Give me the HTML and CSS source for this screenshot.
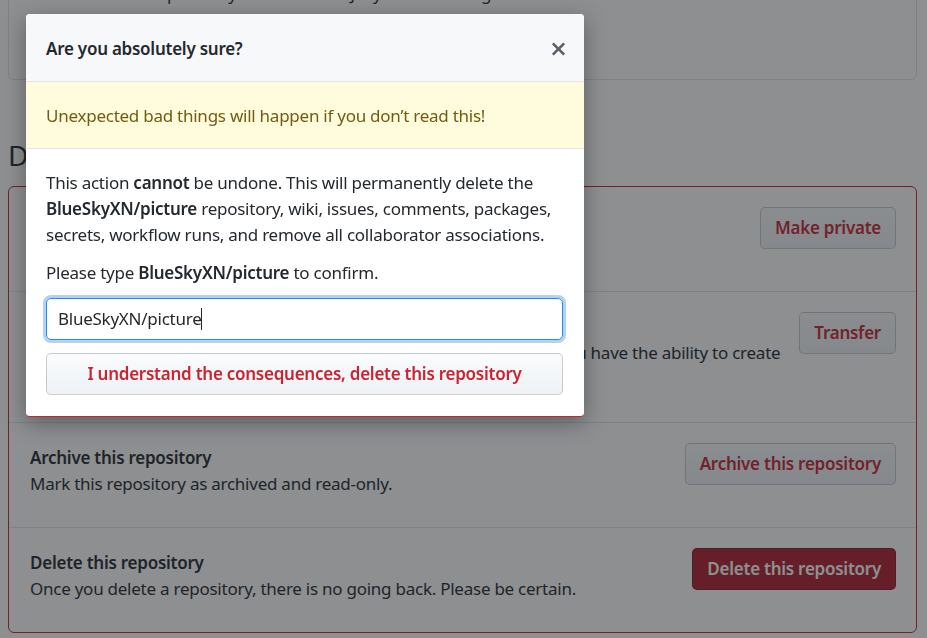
FILE: index.html
```html
<!DOCTYPE html>
<html lang="en">
<head>
<meta charset="utf-8">
<title>Delete repository</title>
<link rel="stylesheet" href="styles.css">
</head>
<body>
<div class="container">
  <div class="pages-box">
    <p>Select a theme to publish your site with a Jekyll theme using the master branch. <a href="#">Learn more.</a></p>
  </div>

  <h2 class="subhead">Danger Zone</h2>

  <div class="danger-box">
    <div class="row">
      <div class="row-text">
        <strong class="row-title">Change repository visibility</strong>
        <p class="row-desc">This repository is currently public.</p>
      </div>
      <button class="btn btn-danger-outline">Make private</button>
    </div>
    <div class="row">
      <div class="row-text">
        <strong class="row-title">Transfer ownership</strong>
        <p class="row-desc">Transfer this repository to another user or to an organization where you have the ability to create repositories.</p>
      </div>
      <button class="btn btn-danger-outline">Transfer</button>
    </div>
    <div class="row">
      <div class="row-text">
        <strong class="row-title">Archive this repository</strong>
        <p class="row-desc">Mark this repository as archived and read-only.</p>
      </div>
      <button class="btn btn-danger-outline">Archive this repository</button>
    </div>
    <div class="row">
      <div class="row-text">
        <strong class="row-title">Delete this repository</strong>
        <p class="row-desc">Once you delete a repository, there is no going back. Please be certain.</p>
      </div>
      <button class="btn btn-danger-solid">Delete this repository</button>
    </div>
  </div>
</div>

<div class="overlay"></div>

<div class="modal" role="dialog">
  <div class="modal-header">
    <h3 class="modal-title">Are you absolutely sure?</h3>
    <button class="modal-close" aria-label="Close">
      <svg width="15" height="20" viewBox="0 0 12 16" aria-hidden="true"><path fill="currentColor" fill-rule="evenodd" d="M7.48 8l3.75 3.75-1.48 1.48L6 9.48l-3.75 3.75-1.48-1.48L4.52 8 .77 4.25l1.480-1.48L6 6.52l3.75-3.75 1.48 1.48L7.48 8z"/></svg>
    </button>
  </div>
  <div class="modal-flash">Unexpected bad things will happen if you don’t read this!</div>
  <div class="modal-body">
    <p class="modal-text">This action <strong>cannot</strong> be undone. This will permanently delete the <strong>BlueSkyXN/picture</strong> repository, wiki, issues, comments, packages, secrets, workflow runs, and remove all collaborator associations.</p>
    <p class="modal-text confirm">Please type <strong>BlueSkyXN/picture</strong> to confirm.</p>
    <div class="input-wrap"><span class="input-value">BlueSkyXN/picture</span><span class="caret"></span></div>
    <button class="btn btn-block">I understand the consequences, delete this repository</button>
  </div>
</div>
</body>
</html>
```

FILE: styles.css
```css
* { box-sizing: border-box; }

html, body {
  margin: 0;
  padding: 0;
  height: 100%;
  overflow: hidden;
}

body {
  background: #ffffff;
  color: #24292e;
  font-family: "Noto Sans", "Open Sans", sans-serif;
  font-size: 17px;
  line-height: 26px;
  letter-spacing: -0.25px;
  position: relative;
}

.container {
  margin: 0 10px 0 8px;
}

.pages-box {
  margin-top: -34px;
  height: 114px;
  border: 1px solid #e1e4e8;
  border-radius: 6px;
  padding: 14px 20px 0;
}

.pages-box p { margin: 0; }
.pages-box a { color: #0366d6; text-decoration: none; }

.subhead {
  margin: 57px 0 13px;
  font-size: 28px;
  font-weight: 400;
  line-height: 36px;
}

.danger-box {
  border: 1px solid #cb2431;
  border-radius: 6px;
}

.row {
  display: flex;
  justify-content: space-between;
  align-items: flex-start;
  gap: 12px;
  padding: 22px 20px 30px 21px;
}

.row + .row { border-top: 1px solid #e1e4e8; }

.row-title {
  display: block;
  font-weight: 600;
}

.row-desc { margin: 0; }

.btn {
  font-family: inherit;
  font-size: 17px;
  font-weight: 600;
  letter-spacing: inherit;
  line-height: 26px;
  height: 42px;
  padding: 7px 14px;
  border: 1px solid rgba(27, 31, 35, 0.2);
  border-radius: 5px;
  background: linear-gradient(#fafbfc, #eff3f6 90%);
  color: #cb2431;
  white-space: nowrap;
  flex-shrink: 0;
}

.row .btn { margin-top: -2px; }

.btn-danger-solid {
  background: #b01e2c;
  border-color: rgba(27, 31, 35, 0.3);
  color: #ffffff;
}

.overlay {
  position: fixed;
  inset: 0;
  background: rgba(27, 31, 35, 0.5);
}

.modal {
  position: absolute;
  left: 26px;
  top: 14px;
  width: 558px;
  background: #ffffff;
  border-radius: 4px;
  border-bottom: 1px solid #cb2431;
  box-shadow: 0 6px 22px rgba(0, 0, 0, 0.35);
  overflow: hidden;
}

.modal-header {
  display: flex;
  align-items: center;
  justify-content: space-between;
  height: 68px;
  padding: 2px 20px 0;
  background: #f6f8fa;
  border-bottom: 1px solid #e1e4e8;
}

.modal-title {
  margin: 0;
  font-size: 17px;
  font-weight: 600;
}

.modal-close {
  border: 0;
  background: none;
  padding: 0;
  color: #586069;
  display: flex;
  margin-right: -2px;
}

.modal-flash {
  height: 67px;
  display: flex;
  align-items: center;
  padding: 1px 20px 0;
  background: #fffbdd;
  color: #735c0f;
  border-bottom: 1px solid #e1e4e8;
}

.modal-body {
  padding: 21px 20px 21px;
}

.modal-text {
  margin: 0;
}

.modal-text strong { font-weight: 600; }

.confirm { margin-top: 12px; }

.input-wrap {
  margin-top: 12px;
  height: 42px;
  display: flex;
  align-items: center;
  padding: 0 11px;
  border: 1px solid #2188ff;
  border-radius: 5px;
  box-shadow: 0 0 0 3px rgba(3, 102, 214, 0.3);
  color: #24292e;
  width: 517px;
}

.caret {
  display: inline-block;
  width: 1px;
  height: 22px;
  background: #24292e;
}

.btn-block {
  display: block;
  width: 517px;
  margin-top: 13px;
  text-align: center;
}
```
